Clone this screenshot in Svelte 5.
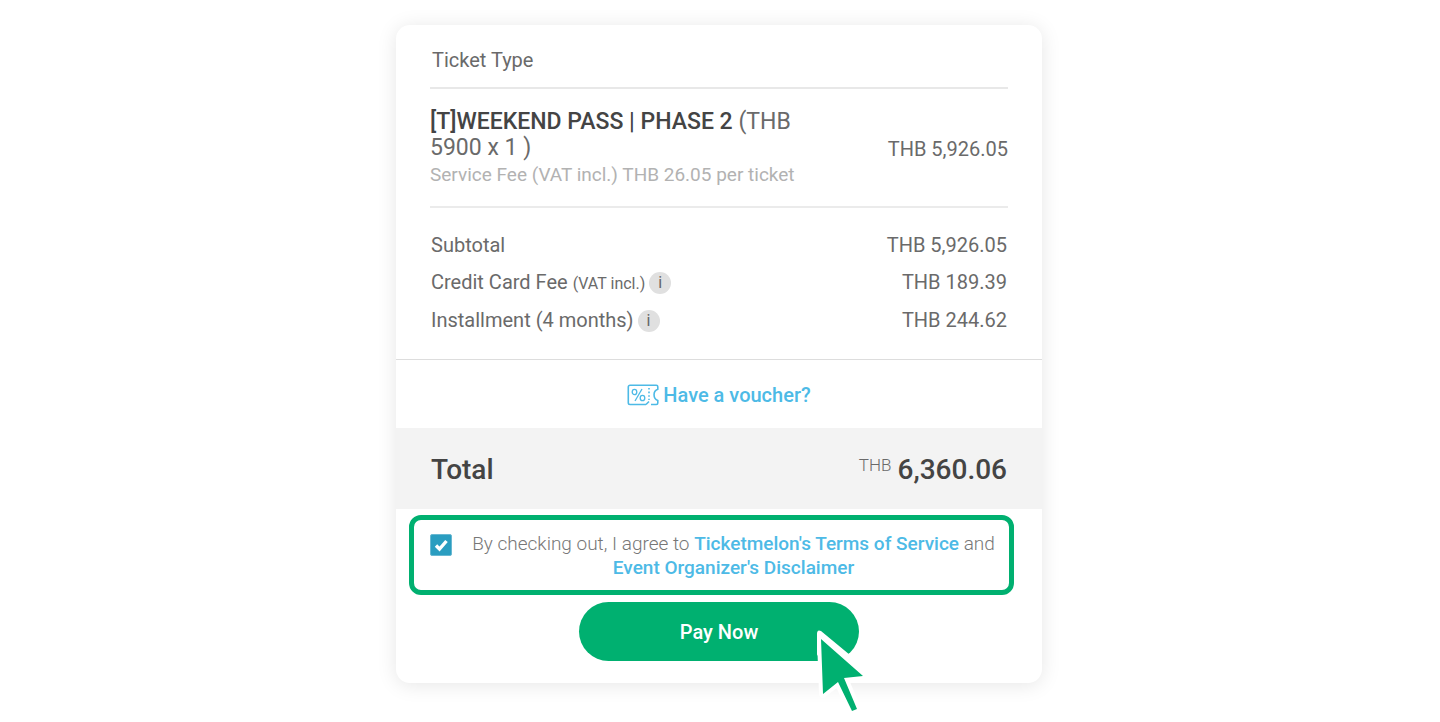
<script>
  const fees = [
    { label: 'Subtotal', amount: 'THB 5,926.05' },
    { label: 'Credit Card Fee', note: '(VAT incl.)', info: true, amount: 'THB 189.39' },
    { label: 'Installment (4 months)', info: true, amount: 'THB 244.62' }
  ];
  let agreed = $state(true);
</script>

<main>
  <section class="card">
    <div class="tickets">
      <h2>Ticket Type</h2>
      <div class="ticket">
        <div class="detail">
          <p class="name"><strong>[T]WEEKEND PASS | PHASE 2</strong> (THB 5900 x 1 )</p>
          <p class="service">Service Fee (VAT incl.) THB 26.05 per ticket</p>
        </div>
        <span class="amount">THB 5,926.05</span>
      </div>
    </div>

    <dl class="fees">
      {#each fees as fee}
        <div class="row">
          <dt>
            <span>{fee.label}{#if fee.note}&nbsp;<small>{fee.note}</small>{/if}</span>
            {#if fee.info}<button class="info" type="button">i</button>{/if}
          </dt>
          <dd>{fee.amount}</dd>
        </div>
      {/each}
    </dl>

    <div class="voucher">
      <a href="#voucher">
        <svg width="32" height="22" viewBox="0 0 32 22" fill="none" stroke="currentColor" stroke-width="1.6" aria-hidden="true">
          <path d="M19 20.5H3a1.7 1.7 0 0 1-1.7-1.7V3A1.7 1.7 0 0 1 3 1.3h26.3q1.5 0 1.5 1.5v2.4c-5 1.6-5 9.6 0 11.4v2.4q0 1.500-1.500 1.500H24M19 20.500l3-3" />
          <path d="M22 4v12" stroke-dasharray="1.6 2" />
          <path d="M15 5 8 17" stroke-width="1.3" />
          <ellipse cx="7.500" cy="8" rx="2.300" ry="2.700" stroke-width="1.300" />
          <ellipse cx="15.500" cy="14" rx="2.300" ry="2.700" stroke-width="1.300" />
        </svg>
        <span>Have a voucher?</span>
      </a>
    </div>

    <div class="total">
      <span class="sum">Total</span>
      <span class="price"><span class="currency">THB</span><span class="sum">6,360.06</span></span>
    </div>

    <div class="terms">
      <input id="agree" type="checkbox" bind:checked={agreed} />
      <label for="agree">By checking out, I agree to <a href="#terms">Ticketmelon's Terms of Service</a> and <a href="#disclaimer">Event Organizer's Disclaimer</a></label>
    </div>

    <div class="action">
      <button class="pay" type="button">Pay Now</button>
      <svg class="cursor" width="52" height="86" viewBox="0 0 52 86" aria-hidden="true">
        <path d="M4 8q0-5 4-3L37 29 31 37 10 20 4 30Z" fill="#fff" />
        <path d="M8 13 50 50 31 52 44 83 39 85 25 56 10 68Z" fill="#00b070" stroke="#fff" stroke-width="8" stroke-linejoin="round" />
        <path d="M8 13 50 50 31 52 44 83 39 85 25 56 10 68Z" fill="#00b070" />
      </svg>
    </div>
  </section>
</main>

<style>
  :global(body) { background: #fff; }
  main {
    font-family: Roboto, "Liberation Sans", sans-serif;
    font-size: 20px;
    color: #6a6a6a;
    padding: 25px 17px 38px 15px;
  }
  .card {
    max-width: 646px;
    margin: 0 auto;
    border-radius: 14px;
    background: #fff;
    box-shadow: 0 2px 20px rgba(0, 0, 0, 0.1);
  }
  h2, p, dl, dd { margin: 0; }
  .tickets { padding: 0 34px; }
  h2 {
    padding: 23px 2px 15px;
    border-bottom: 2px solid #e8e8e8;
    font-size: 20px;
    font-weight: 400;
    line-height: 24px;
  }
  .ticket {
    display: flex;
    align-items: center;
    justify-content: space-between;
    padding: 20px 0 18px;
    border-bottom: 2px solid #ebebeb;
  }
  .detail { flex: 0 1 380px; }
  .name { font-size: 23px; line-height: 26px; }
  .name strong { font-weight: 500; color: #444; }
  .service { font-size: 19px; line-height: 27px; color: #b2b2b2; }
  .amount { white-space: nowrap; }
  .fees {
    padding: 19px 35px 20px;
    border-bottom: 1px solid #ddd;
  }
  .row {
    display: flex;
    justify-content: space-between;
    line-height: 37px;
  }
  dt { display: flex; align-items: center; gap: 4px; }
  small { font-size: 16px; }
  .info {
    width: 22px;
    height: 22px;
    padding: 0;
    border: 0;
    border-radius: 50%;
    background: #e0e0e0;
    color: #666;
    font: 400 16px/22px Roboto, sans-serif;
  }
  .voucher {
    display: flex;
    justify-content: center;
    padding: 23px 0 21px;
    line-height: 24px;
  }
  a { color: #4dbae6; font-weight: 500; text-decoration: none; }
  .voucher a { display: flex; align-items: center; gap: 4px; }
  .total {
    display: flex;
    justify-content: space-between;
    padding: 24px 35px 21px;
    background: #f3f3f3;
    line-height: 36px;
  }
  .sum { font-size: 28px; font-weight: 500; color: #444; }
  .price { display: flex; gap: 6px; }
  .currency { font-size: 17px; font-weight: 300; line-height: 26px; }
  .terms {
    display: flex;
    align-items: flex-start;
    gap: 12px;
    margin: 6px 28px 0 13px;
    padding: 12px 6px 10px 16px;
    border: 5px solid #00b070;
    border-radius: 12px;
  }
  .terms input {
    appearance: none;
    flex: none;
    width: 22px;
    height: 22px;
    margin: 2px 0 0;
    border: 1px solid #68b8d2;
    border-radius: 2px;
  }
  .terms input:checked {
    background: #2a9dc0 url("data:image/svg+xml,%3Csvg xmlns='http://www.w3.org/2000/svg' viewBox='0 0 20 20'%3E%3Cpath d='M5 10.500 8.500 14 15.500 6' fill='none' stroke='white' stroke-width='3.400'/%3E%3C/svg%3E");
  }
  .terms label {
    flex: 1;
    font-size: 19px;
    font-weight: 300;
    line-height: 24px;
    text-align: center;
    color: #777;
  }
  .action {
    position: relative;
    width: 280px;
    max-width: 100%;
    margin: 0 auto;
    padding: 7px 0 22px;
  }
  .pay {
    display: block;
    width: 100%;
    padding: 18px 0 17px;
    border: 0;
    border-radius: 30px;
    background: #00b070;
    color: #fff;
    font: 500 20px/24px Roboto, sans-serif;
  }
  .cursor {
    position: absolute;
    top: 31px;
    right: -6px;
    overflow: visible;
  }
</style>
